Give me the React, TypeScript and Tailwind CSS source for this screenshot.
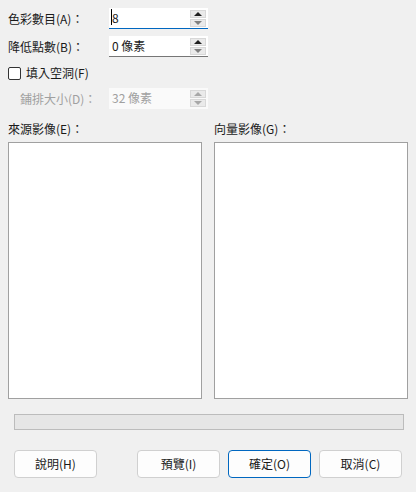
const font = { fontFamily: '"Noto Sans CJK TC", "Noto Sans", sans-serif' };

function Spin({ disabled }: { disabled?: boolean }) {
  const up = disabled ? 'border-b-[#a8a8a8]' : 'border-b-[#202020]';
  const down = disabled ? 'border-t-[#a8a8a8]' : 'border-t-[#808080]';
  return (
    <div className="flex w-[16px] flex-col gap-[1px] self-center">
      <div className="flex h-[8px] items-center justify-center border border-[#d8d8d8] bg-[#eaeaea]">
        <div className={`h-0 w-0 border-x-[4px] border-b-[4px] border-x-transparent ${up}`} />
      </div>
      <div className="flex h-[8px] items-center justify-center border border-[#d8d8d8] bg-[#eaeaea]">
        <div className={`h-0 w-0 border-x-[4px] border-t-[4px] border-x-transparent ${down}`} />
      </div>
    </div>
  );
}

function Field({ label, value, focused, disabled, indent }: { label: string; value: string; focused?: boolean; disabled?: boolean; indent?: boolean }) {
  const line = disabled ? 'border-b-transparent bg-[#fafafa]' : focused ? 'border-b-[#0067c0] bg-white' : 'border-b-[#767676] bg-white';
  return (
    <div className="flex h-[21px] items-center">
      <div className={`w-[101px] text-[12px] leading-none ${indent ? 'pl-[12px] text-[#a0a0a0]' : 'text-[#1a1a1a]'}`}>{label}</div>
      <div className={`flex h-[21px] w-[99px] items-center border-b ${line} pr-[2px]`}>
        <div className={`relative flex-1 pl-[3px] text-[12px] leading-none ${disabled ? 'text-[#a0a0a0]' : 'text-[#1a1a1a]'}`}>
          {focused && <span className="absolute left-[2px] top-[-3px] h-[16px] w-[1px] bg-black" />}
          {value}
        </div>
        <Spin disabled={disabled} />
      </div>
    </div>
  );
}

function Btn({ label, focused }: { label: string; focused?: boolean }) {
  return (
    <div className={`flex h-[28px] w-[83px] items-center justify-center rounded-[4px] border bg-[#fdfdfd] text-[12px] text-[#1a1a1a] ${focused ? 'border-[#0067c0]' : 'border-[#d0d0d0]'}`}>
      {label}
    </div>
  );
}

export default function App() {
  return (
    <div className="flex h-[492px] w-[416px] flex-col bg-[#f0f0f0] px-[8px] pt-[8px]" style={font}>
      <div className="flex flex-col gap-[7px]">
        <Field label="色彩數目(A)：" value="8" focused />
        <Field label="降低點數(B)：" value="0 像素" />
      </div>
      <div className="mt-[9px] flex h-[14px] items-center gap-[5px]">
        <div className="h-[13px] w-[13px] rounded-[2px] border border-[#333] bg-white" />
        <span className="text-[12px] leading-none text-[#1a1a1a]">填入空洞(F)</span>
      </div>
      <div className="mt-[8px]">
        <Field label="鋪排大小(D)：" value="32 像素" disabled indent />
      </div>
      <div className="mt-[13px] grid grid-cols-2 gap-[12px]">
        <div className="flex flex-col gap-[7px]">
          <span className="text-[12px] leading-[13px] text-[#1a1a1a]">來源影像(E)：</span>
          <div className="h-[257px] border border-[#a0a0a0] bg-white" />
        </div>
        <div className="flex flex-col gap-[7px]">
          <span className="text-[12px] leading-[13px] text-[#1a1a1a]">向量影像(G)：</span>
          <div className="h-[257px] border border-[#a0a0a0] bg-white" />
        </div>
      </div>
      <div className="ml-[6px] mr-[4px] mt-[15px] h-[16px] border border-[#bcbcbc] bg-[#e6e6e6]" />
      <div className="mx-[6px] mt-[20px] flex items-center">
        <Btn label="說明(H)" />
        <div className="ml-[40px] flex gap-[8px]">
          <Btn label="預覽(I)" />
          <Btn label="確定(O)" focused />
          <Btn label="取消(C)" />
        </div>
      </div>
    </div>
  );
}
